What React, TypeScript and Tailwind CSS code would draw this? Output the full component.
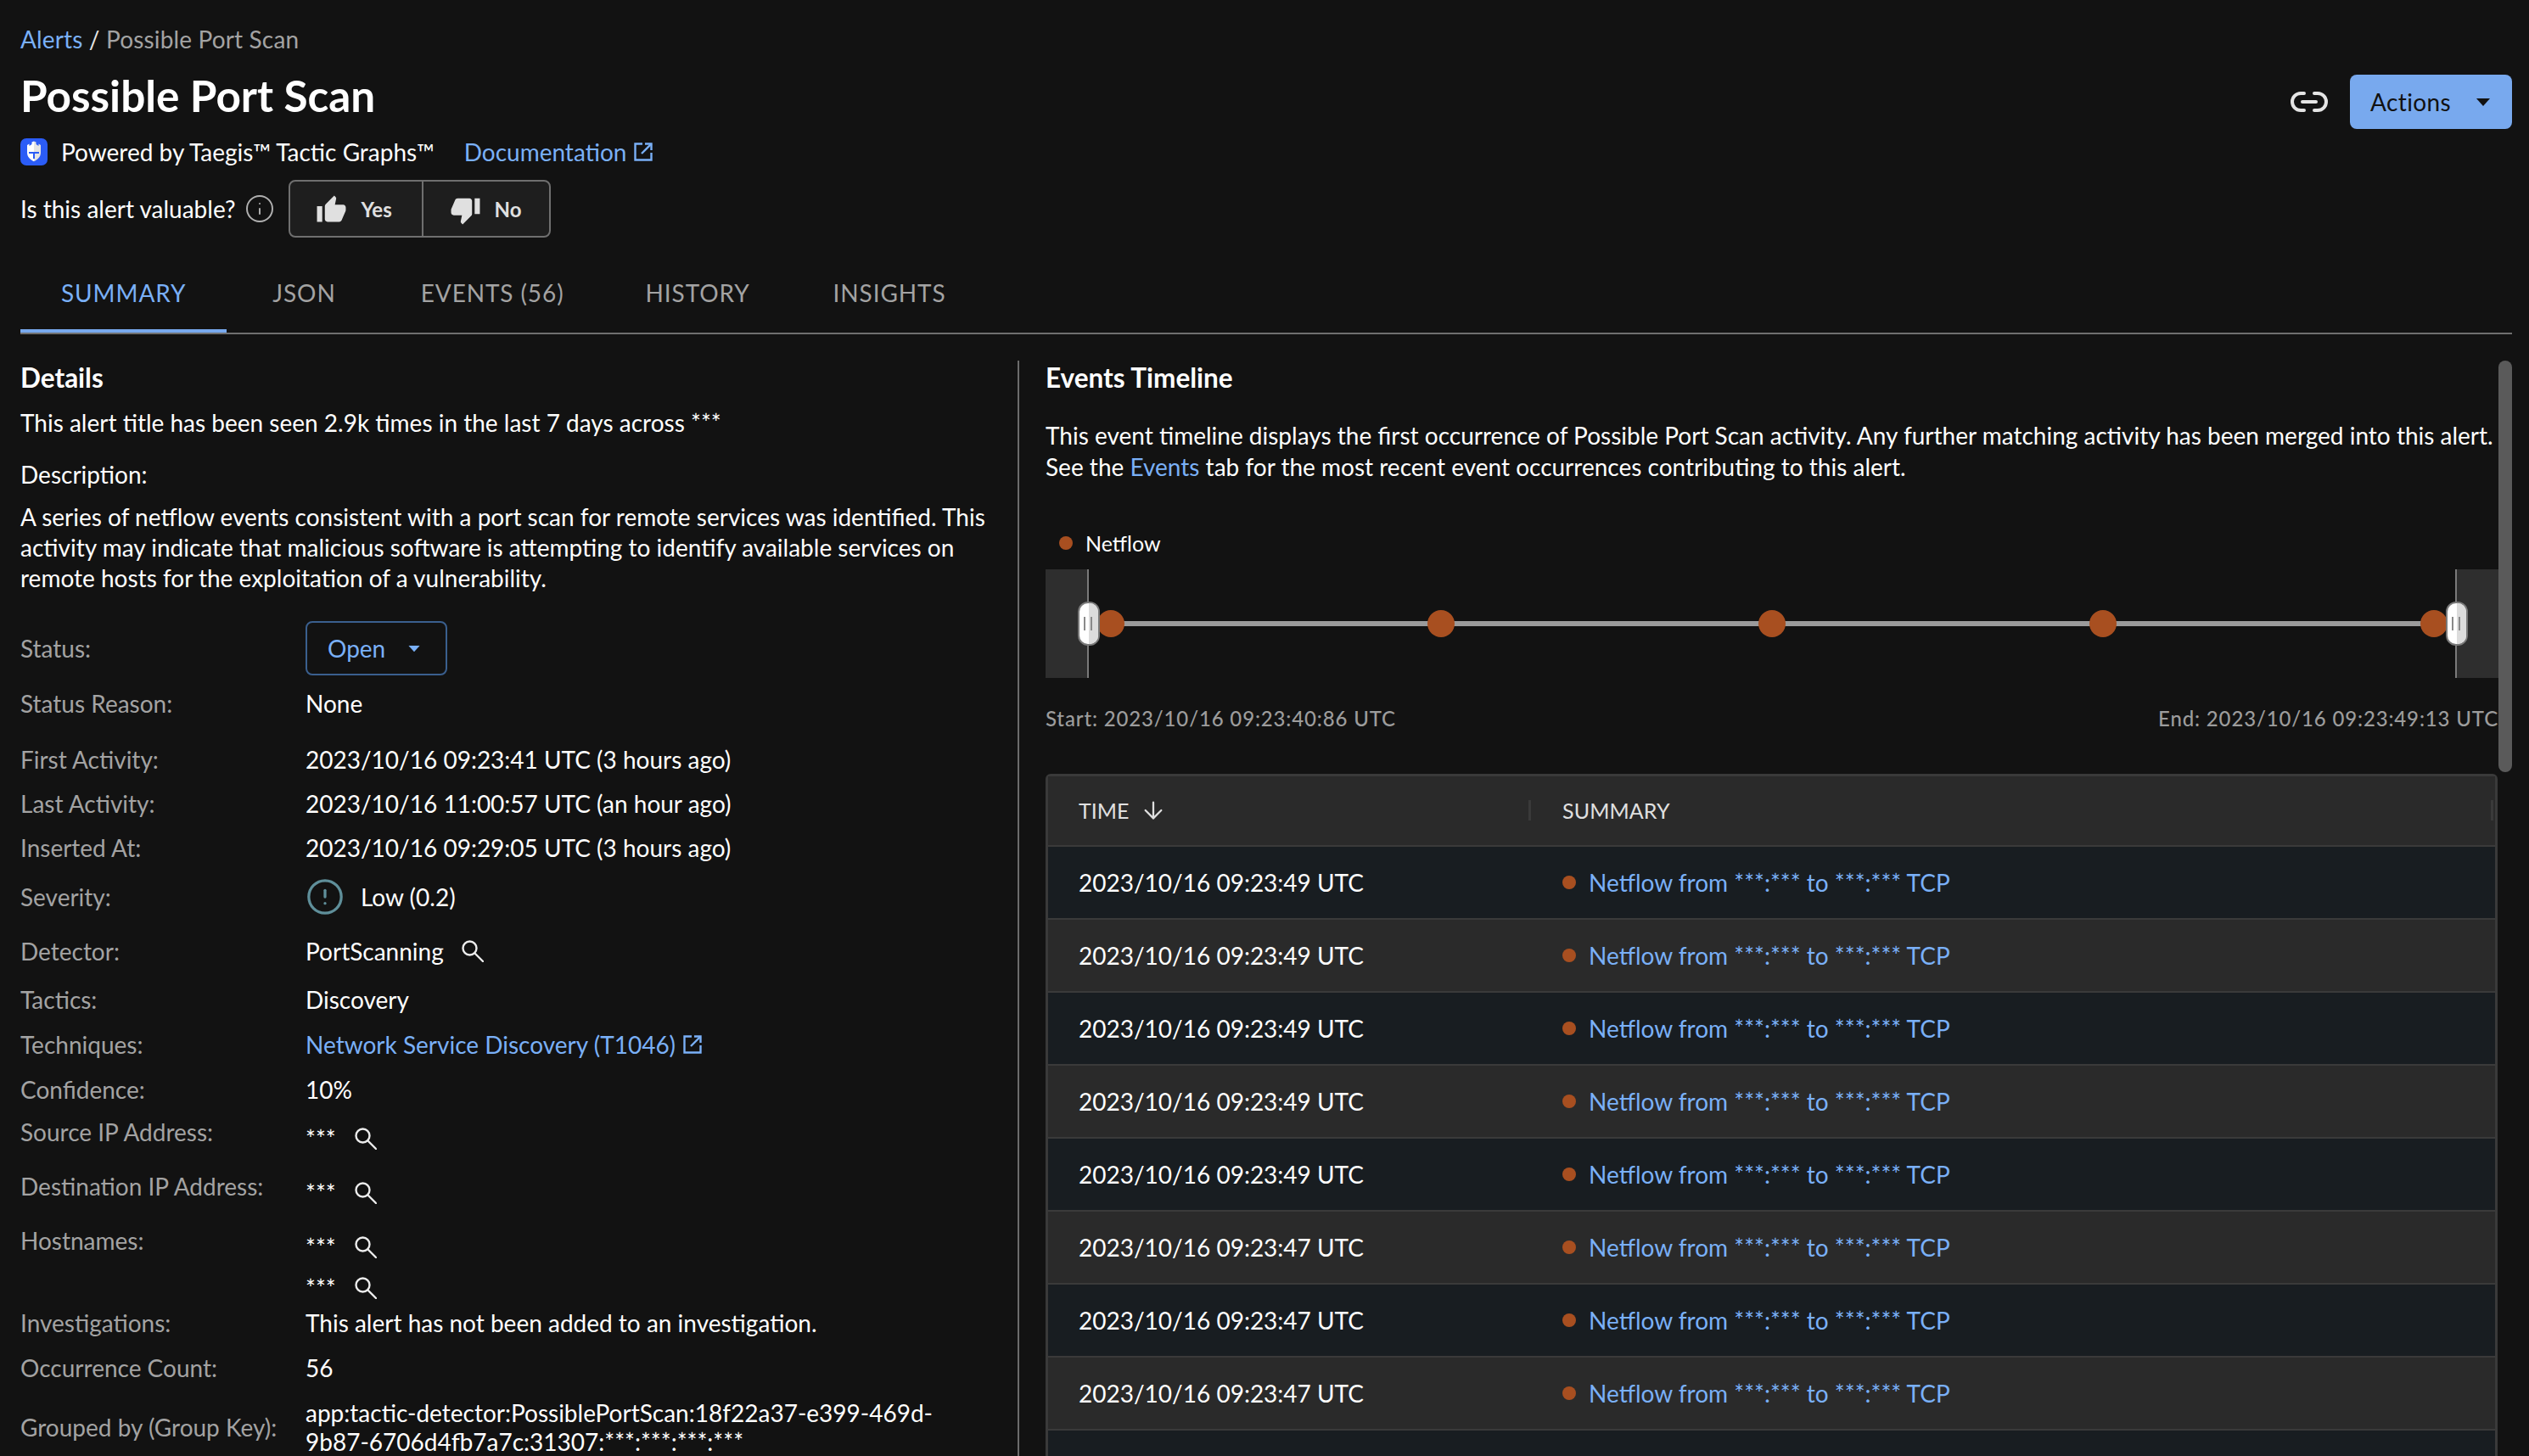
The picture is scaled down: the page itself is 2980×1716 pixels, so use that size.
import type { ReactNode } from 'react'
import { ArrowDown, CircleAlert, Info, Link2 } from 'lucide-react'
import { MdThumbDown, MdThumbUp } from 'react-icons/md'

function Caret({ className }: { className: string }) {
  return (
    <svg width="16" height="9" viewBox="0 0 16 9" className={className} fill="currentColor">
      <path d="M0 0h16L8 9z" />
    </svg>
  )
}

function Logo() {
  return (
    <svg width="32" height="32" viewBox="0 0 32 32" className="shrink-0">
      <rect width="32" height="32" rx="7" fill="#2b5cf6" />
      <path d="M8 17V8l2.500-1.500V9l3-2V4.500L16 3.500v23.700c-4-2-8-5.200-8-10.200z" fill="#fff" />
      <path d="M24 17V8l-2.500-1.500V9l-3-2V4.500L16 3.500v23.700c4-2 8-5.200 8-10.200z" fill="#e4e4e4" />
      <path d="M10 16h12v2h-5v6h-2v-6h-5z" fill="#2b5cf6" />
    </svg>
  )
}

function ExternalIcon() {
  return (
    <svg width="26" height="26" viewBox="0 0 26 26" className="ml-[7px] shrink-0" fill="none" stroke="#7ab0f7" strokeWidth="2.400">
      <path d="M12 3.500H3.500v19h19V14" />
      <path d="M11 15L22.500 3.500" />
      <path d="M15 3.500h7.500V11" />
    </svg>
  )
}

function SearchIcon({ className }: { className: string }) {
  return (
    <svg width="26" height="26" viewBox="0 0 26 26" className={`shrink-0 ${className}`} fill="none" stroke="#ececec" strokeWidth="2.400">
      <circle cx="9.500" cy="9.500" r="8" />
      <path d="M15.500 15.500L25 25" strokeLinecap="round" />
    </svg>
  )
}

function Row({ label, className, children }: { label: string; className: string; children: ReactNode }) {
  return (
    <div className={`flex items-center ${className}`}>
      <div className="w-[336px] shrink-0 text-[#a3a3a3]">{label}</div>
      <div className="flex items-center text-white">{children}</div>
    </div>
  )
}

function MaskedRow({ label }: { label: string }) {
  return (
    <div className="flex h-[64px] items-start">
      <div className="flex h-[59px] w-[336px] shrink-0 items-center text-[#a3a3a3]">{label}</div>
      <div className="flex h-[76px] items-center text-white">
        ***
        <SearchIcon className="ml-[22px]" />
      </div>
    </div>
  )
}

const tabs = [
  { label: 'SUMMARY', gap: 'ml-0' },
  { label: 'JSON', gap: 'ml-[6px]' },
  { label: 'EVENTS (56)', gap: 'ml-[4px]' },
  { label: 'HISTORY', gap: 'ml-0' },
  { label: 'INSIGHTS', gap: 'ml-[2px]' },
]
const rowTimes = [
  '2023/10/16 09:23:49 UTC',
  '2023/10/16 09:23:49 UTC',
  '2023/10/16 09:23:49 UTC',
  '2023/10/16 09:23:49 UTC',
  '2023/10/16 09:23:49 UTC',
  '2023/10/16 09:23:47 UTC',
  '2023/10/16 09:23:47 UTC',
  '2023/10/16 09:23:47 UTC',
]

function Timeline() {
  const dots = [77, 466, 856, 1246, 1636]
  return (
    <svg width="1712" height="128" viewBox="0 0 1712 128" className="mt-[11px] block">
      <rect x="0" y="0" width="50" height="128" fill="#2e2e2e" />
      <rect x="49" y="0" width="2" height="128" fill="#7a7a7a" />
      <rect x="1661" y="0" width="51" height="128" fill="#2e2e2e" />
      <rect x="1661" y="0" width="2" height="128" fill="#7a7a7a" />
      <rect x="77" y="61" width="1559" height="6" fill="#9b9b9b" />
      {dots.map(x => (
        <circle key={x} cx={x} cy="64" r="16" fill="#a84f20" />
      ))}
      {[38, 1650].map(x => (
        <g key={x}>
          <rect x={x + 1} y="39" width="24" height="50" rx="11" fill="#fff" stroke="#7a7a7a" strokeWidth="2" />
          <path d={`M${x + 13} 40h1a10 10 0 0 1 10 10v28a10 10 0 0 1-10 10h-1z`} fill="#dcdcdc" />
          <rect x={x + 7} y="56" width="2" height="16" fill="#8a8a8a" />
          <rect x={x + 15} y="56" width="2" height="16" fill="#8a8a8a" />
        </g>
      ))}
    </svg>
  )
}

export default function App() {
  return (
    <div className="h-[1716px] w-[2980px] overflow-hidden bg-[#121212] pl-[24px] pr-[20px] font-[Lato,sans-serif] text-[28px] leading-[36px] text-white">
      <div className="flex items-start justify-between">
        <div className="pt-[28px]">
          <div className="tracking-[0.15px] text-[#a3a3a3]">
            <span className="text-[#7ab0f7]">Alerts</span>
            <span className="text-[#e6e6e6]"> / </span>
            Possible Port Scan
          </div>
          <h1 className="flex h-[98px] items-center pb-[2px] text-[51.300px] font-bold">Possible Port Scan</h1>
          <div className="flex h-[34px] items-center">
            <Logo />
            <span className="ml-[16px]">Powered by Taegis™ Tactic Graphs™</span>
            <span className="ml-[35px] text-[#7ab0f7]">Documentation</span>
            <ExternalIcon />
          </div>
          <div className="mt-[16px] flex h-[68px] items-center">
            <span>Is this alert valuable?</span>
            <Info size={36} strokeWidth={1.3} className="ml-[10px] text-[#b0b0b0]" />
            <div className="ml-[16px] flex h-[68px] w-[309px] rounded-[8px] border-2 border-[#6f6f6f] bg-[#1e1e1e] text-[24px] font-bold text-[#e0e0e0]">
              <div className="flex w-[157px] items-center border-r-2 border-[#6f6f6f] pl-[30px] pt-[2px]">
                <MdThumbUp size={37} />
                <span className="ml-[17px]">Yes</span>
              </div>
              <div className="flex flex-1 items-center pl-[31px] pt-[2px]">
                <MdThumbDown size={37} />
                <span className="ml-[16px]">No</span>
              </div>
            </div>
          </div>
        </div>
        <div className="mt-[88px] flex items-center">
          <Link2 size={48} strokeWidth={2} className="text-[#e4e4e4]" />
          <div className="ml-[24px] flex h-[64px] w-[191px] items-center rounded-[8px] bg-[#78a9ee] pl-[24px] tracking-[0.4px] text-[#111]">
            Actions
            <Caret className="ml-[30px]" />
          </div>
        </div>
      </div>

      <div className="flex h-[114px] border-b-2 border-[#6f6f6f]">
        {tabs.map((t, i) => (
          <div
            key={t.label}
            className={`flex h-[112px] items-center border-b-4 px-[48px] pt-[22px] tracking-[0.9px] ${t.gap} ${
              i === 0 ? 'border-[#78a9ee] text-[#7ab0f7]' : 'border-transparent text-[#a3a3a3]'
            }`}
          >
            {t.label}
          </div>
        ))}
      </div>

      <div className="mt-[31px] flex">
        <div className="w-[1175px] shrink-0">
          <h2 className="flex h-[40px] items-center text-[31.500px] font-bold">Details</h2>
          <p className="mt-[15px]">This alert title has been seen 2.9k times in the last 7 days across ***</p>
          <p className="mt-[25px]">Description:</p>
          <p className="mt-[14px] w-[1165px]">
            A series of netflow events consistent with a port scan for remote services was identified. This activity
            may indicate that malicious software is attempting to identify available services on remote hosts for the
            exploitation of a vulnerability.
          </p>
          <div className="mt-[33px]">
            <Row label="Status:" className="h-[64px]">
              <div className="flex h-[64px] w-[167px] items-center rounded-[8px] border-2 border-[#3a5f8e] pl-[24px] text-[#7ab0f7]">
                Open
                <Caret className="ml-[26px] scale-[0.85]" />
              </div>
            </Row>
            <Row label="Status Reason:" className="h-[68px] pb-[2px]">None</Row>
            <Row label="First Activity:" className="h-[62px]">2023/10/16 09:23:41 UTC (3 hours ago)</Row>
            <Row label="Last Activity:" className="h-[42px]">2023/10/16 11:00:57 UTC (an hour ago)</Row>
            <Row label="Inserted At:" className="h-[62px]">2023/10/16 09:29:05 UTC (3 hours ago)</Row>
            <Row label="Severity:" className="h-[54px]">
              <CircleAlert size={46} strokeWidth={1.7} className="text-[#5f8f9a]" />
              <span className="ml-[19px]">Low (0.2)</span>
            </Row>
            <Row label="Detector:" className="h-[74px]">
              PortScanning
              <SearchIcon className="ml-[21px]" />
            </Row>
            <Row label="Tactics:" className="h-[40px]">Discovery</Row>
            <Row label="Techniques:" className="h-[66px]">
              <span className="text-[#7ab0f7]">Network Service Discovery (T1046)</span>
              <ExternalIcon />
            </Row>
            <Row label="Confidence:" className="h-[40px]">10%</Row>
            <MaskedRow label="Source IP Address:" />
            <MaskedRow label="Destination IP Address:" />
            <div className="flex h-[95px] items-start">
              <div className="flex h-[59px] w-[336px] shrink-0 items-center text-[#a3a3a3]">Hostnames:</div>
              <div className="text-white">
                <div className="flex h-[76px] items-center">
                  ***
                  <SearchIcon className="ml-[22px]" />
                </div>
                <div className="flex h-[20px] items-center">
                  ***
                  <SearchIcon className="ml-[22px]" />
                </div>
              </div>
            </div>
            <Row label="Investigations:" className="h-[64px]">This alert has not been added to an investigation.</Row>
            <Row label="Occurrence Count:" className="h-[41px]">56</Row>
            <div className="mt-[16px] flex items-center">
              <div className="w-[336px] shrink-0 text-[#a3a3a3]">Grouped by (Group Key):</div>
              <div className="w-[800px] leading-[34px] text-white">
                app:tactic-detector:PossiblePortScan:18f22a37-e399-469d-
                <br />
                9b87-6706d4fb7a7c:31307:***:***:***:***
              </div>
            </div>
          </div>
        </div>

        <div className="h-[1300px] w-[2px] shrink-0 bg-[#6b6b6b]" />

        <div className="ml-[31px] w-[1712px] shrink-0">
          <h2 className="flex h-[40px] items-center text-[31.500px] font-bold">Events Timeline</h2>
          <p className="mt-[30px] leading-[37px]">
            This event timeline displays the first occurrence of Possible Port Scan activity. Any further matching
            activity has been merged into this alert.
            <br />
            See the <span className="text-[#7ab0f7]">Events</span> tab for the most recent event occurrences
            contributing to this alert.
          </p>
          <div className="mt-[51px] flex h-[40px] items-center pl-[16px] text-[25px]">
            <span className="h-[16px] w-[16px] rounded-full bg-[#a84f20]" />
            <span className="ml-[15px]">Netflow</span>
          </div>
          <Timeline />
          <div className="mt-[32px] flex h-[32px] items-center justify-between text-[24px] font-medium tracking-[0.85px] text-[#9c9c9c]">
            <span>Start: 2023/10/16 09:23:40:86 UTC</span>
            <span>End: 2023/10/16 09:23:49:13 UTC</span>
          </div>
          <div className="mt-[49px] w-[1711px] rounded-t-[6px] border-[3px] border-[#3a3a3a]">
            <div className="flex h-[83px] items-center border-b-2 border-[#3a3a3a] bg-[#2a2a2a] pb-[2px] text-[25px] text-[#e0e0e0]">
              <div className="flex w-[566px] items-center pl-[36px]">
                TIME
                <ArrowDown size={32} strokeWidth={1.7} className="ml-[13px]" />
              </div>
              <div className="h-[24px] w-[3px] bg-[#3a3a3a]" />
              <div className="flex-1 pl-[37px] tracking-[0.1px]">SUMMARY</div>
              <div className="mr-[2px] h-[24px] w-[3px] bg-[#3a3a3a]" />
            </div>
            {rowTimes.map((t, i) => (
              <div
                key={i}
                className={
                  i % 2 === 0
                    ? 'flex h-[86px] items-center border-b-2 border-[#3a3a3a] bg-[#181d21]'
                    : 'flex h-[86px] items-center border-b-2 border-[#3a3a3a] bg-[#2a2a2a]'
                }
              >
                <div className="w-[571px] pl-[36px]">{t}</div>
                <div className="flex items-center pl-[35px]">
                  <span className="h-[16px] w-[16px] rounded-full bg-[#a84f20]" />
                  <span className="ml-[15px] text-[#7ab0f7]">Netflow from ***:*** to ***:*** TCP</span>
                </div>
              </div>
            ))}
            <div className="h-[86px] bg-[#181d21]" />
          </div>
        </div>

        <div className="h-[485px] w-[16px] shrink-0 rounded-full bg-[#5a5a5a]" />
      </div>
    </div>
  )
}
